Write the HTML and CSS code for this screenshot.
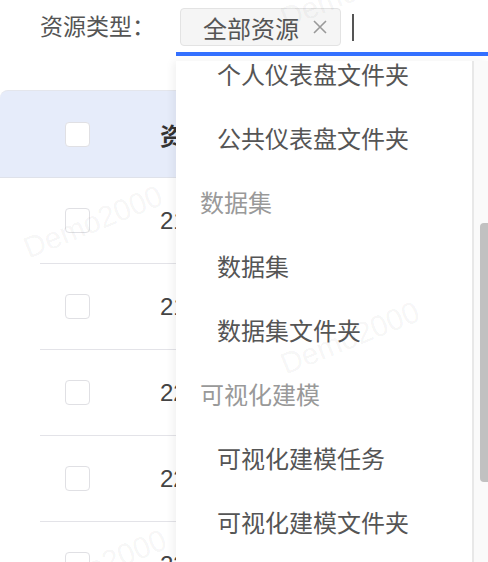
FILE: index.html
```html
<!DOCTYPE html>
<html lang="zh-CN">
<head>
    <meta charset="UTF-8">
    <meta name="viewport" content="width=device-width, initial-scale=1.0">
    <title>资源类型</title>
    <link rel="stylesheet" href="styles.css">
</head>
<body>
    <div class="page">
        <div class="filter">
            <span class="filter-label">资源类型：</span>
            <div class="select">
                <span class="tag">全部资源
                    <svg class="tag-close" width="14" height="14" viewBox="0 0 14 14">
                        <path d="M1 1L13 13M13 1L1 13" stroke="#999" stroke-width="1.6" fill="none"/>
                    </svg>
                </span>
                <span class="caret"></span>
            </div>
        </div>

        <div class="table">
            <div class="row head">
                <span class="cell-check"><span class="checkbox"></span></span>
                <span class="cell-name">资源名称</span>
            </div>
            <div class="row">
                <span class="cell-check"><span class="checkbox"></span></span>
                <span class="cell-name">2105</span>
            </div>
            <div class="row">
                <span class="cell-check"><span class="checkbox"></span></span>
                <span class="cell-name">2187</span>
            </div>
            <div class="row">
                <span class="cell-check"><span class="checkbox"></span></span>
                <span class="cell-name">2203</span>
            </div>
            <div class="row">
                <span class="cell-check"><span class="checkbox"></span></span>
                <span class="cell-name">2256</span>
            </div>
            <div class="row">
                <span class="cell-check"><span class="checkbox"></span></span>
                <span class="cell-name">2301</span>
            </div>
        </div>

        <!-- dropdown of the select, scrolled a little -->
        <div class="dropdown">
            <div class="menu">
                <div class="menu-list">
                    <div class="menu-item">个人仪表盘文件夹</div>
                    <div class="menu-item">公共仪表盘文件夹</div>
                    <div class="menu-group">数据集</div>
                    <div class="menu-item">数据集</div>
                    <div class="menu-item">数据集文件夹</div>
                    <div class="menu-group">可视化建模</div>
                    <div class="menu-item">可视化建模任务</div>
                    <div class="menu-item">可视化建模文件夹</div>
                    <div class="menu-item">模型</div>
                </div>
            </div>
            <div class="track"><div class="thumb"></div></div>
        </div>

        <div class="watermarks">
            <span class="wm wm-1">Demo2000</span>
            <span class="wm wm-2">Demo2000</span>
            <span class="wm wm-3">Demo2000</span>
            <span class="wm wm-4">Demo2000</span>
        </div>
    </div>
</body>
</html>
```

FILE: styles.css
```css
body {
    margin: 0;
    font-family: 'Liberation Sans', 'Noto Sans CJK SC', sans-serif;
    background: white;
    color: #555;
    overflow: hidden;
}

.page {
    position: relative;
    width: 488px;
    height: 562px;
    overflow: hidden;
}

.filter {
    display: flex;
    align-items: flex-start;
    padding-left: 40px;
}

.filter-label {
    width: 136px;
    line-height: 54px;
    font-size: 23px;
    color: #555;
}

.select {
    flex: 1;
    display: flex;
    align-items: center;
    height: 38px;
    padding: 8px 0 6px 4px;
    border-bottom: 4px solid #3370ff;
}

.tag {
    display: flex;
    align-items: center;
    height: 36px;
    padding: 0 13px 0 22px;
    background: #f5f5f5;
    border: 1px solid #e3e3e3;
    border-radius: 4px;
    font-size: 24px;
    color: #555;
}

.tag-close {
    margin-left: 14px;
}

.caret {
    width: 2px;
    height: 27px;
    margin-left: 11px;
    background: #555;
}

.table {
    margin-top: 34px;
}

.row {
    display: flex;
    align-items: center;
    height: 85px;
    margin-left: 40px;
    border-bottom: 1px solid #e3e3e8;
    font-size: 24px;
    color: #444;
}

.row.head {
    height: 86px;
    margin-left: 0;
    padding-left: 40px;
    background: #e6ecfa;
    border-top: 1px solid #e4e6ec;
    border-bottom-color: #dfe2ea;
    border-top-left-radius: 8px;
    font-weight: bold;
    color: #333;
}

.cell-check {
    display: flex;
    width: 95px;
    padding-left: 25px;
}

.checkbox {
    width: 23px;
    height: 23px;
    border: 1.5px solid #e0e0e4;
    border-radius: 4px;
    background: white;
}

.cell-name {
    white-space: nowrap;
}

.dropdown {
    position: absolute;
    top: 61px;
    left: 176px;
    right: 0;
    bottom: 0;
    display: flex;
    background: white;
    box-shadow: -3px 0 8px rgba(0, 0, 0, 0.06);
    overflow: hidden;
}

.menu {
    flex: 1;
    overflow: hidden;
}

.menu-list {
    margin-top: -17px;
}

.menu-item,
.menu-group {
    height: 64px;
    line-height: 64px;
    font-size: 24px;
    white-space: nowrap;
}

.menu-item {
    padding-left: 41px;
    color: #555;
}

.menu-group {
    padding-left: 24px;
    color: #999;
}

.track {
    width: 14px;
    padding-left: 6px;
    background: #fafafa;
    border-left: 2px solid #e8e8e8;
    box-sizing: border-box;
    flex: 0 0 16px;
}

.thumb {
    width: 8px;
    height: 259px;
    margin-top: 162px;
    background: #c1c1c1;
    border-radius: 4px 0 0 4px;
}

.watermarks {
    position: absolute;
    inset: 0;
    pointer-events: none;
}

.wm {
    position: absolute;
    font-size: 30px;
    color: rgba(0, 0, 0, 0.05);
    white-space: nowrap;
    transform: translate(-50%, -50%) rotate(-22deg);
}

.wm-1 { left: 93px; top: 222px; }
.wm-2 { left: 350px; top: 338px; }
.wm-3 { left: 350px; top: -8px; }
.wm-4 { left: 97px; top: 566px; }
```
